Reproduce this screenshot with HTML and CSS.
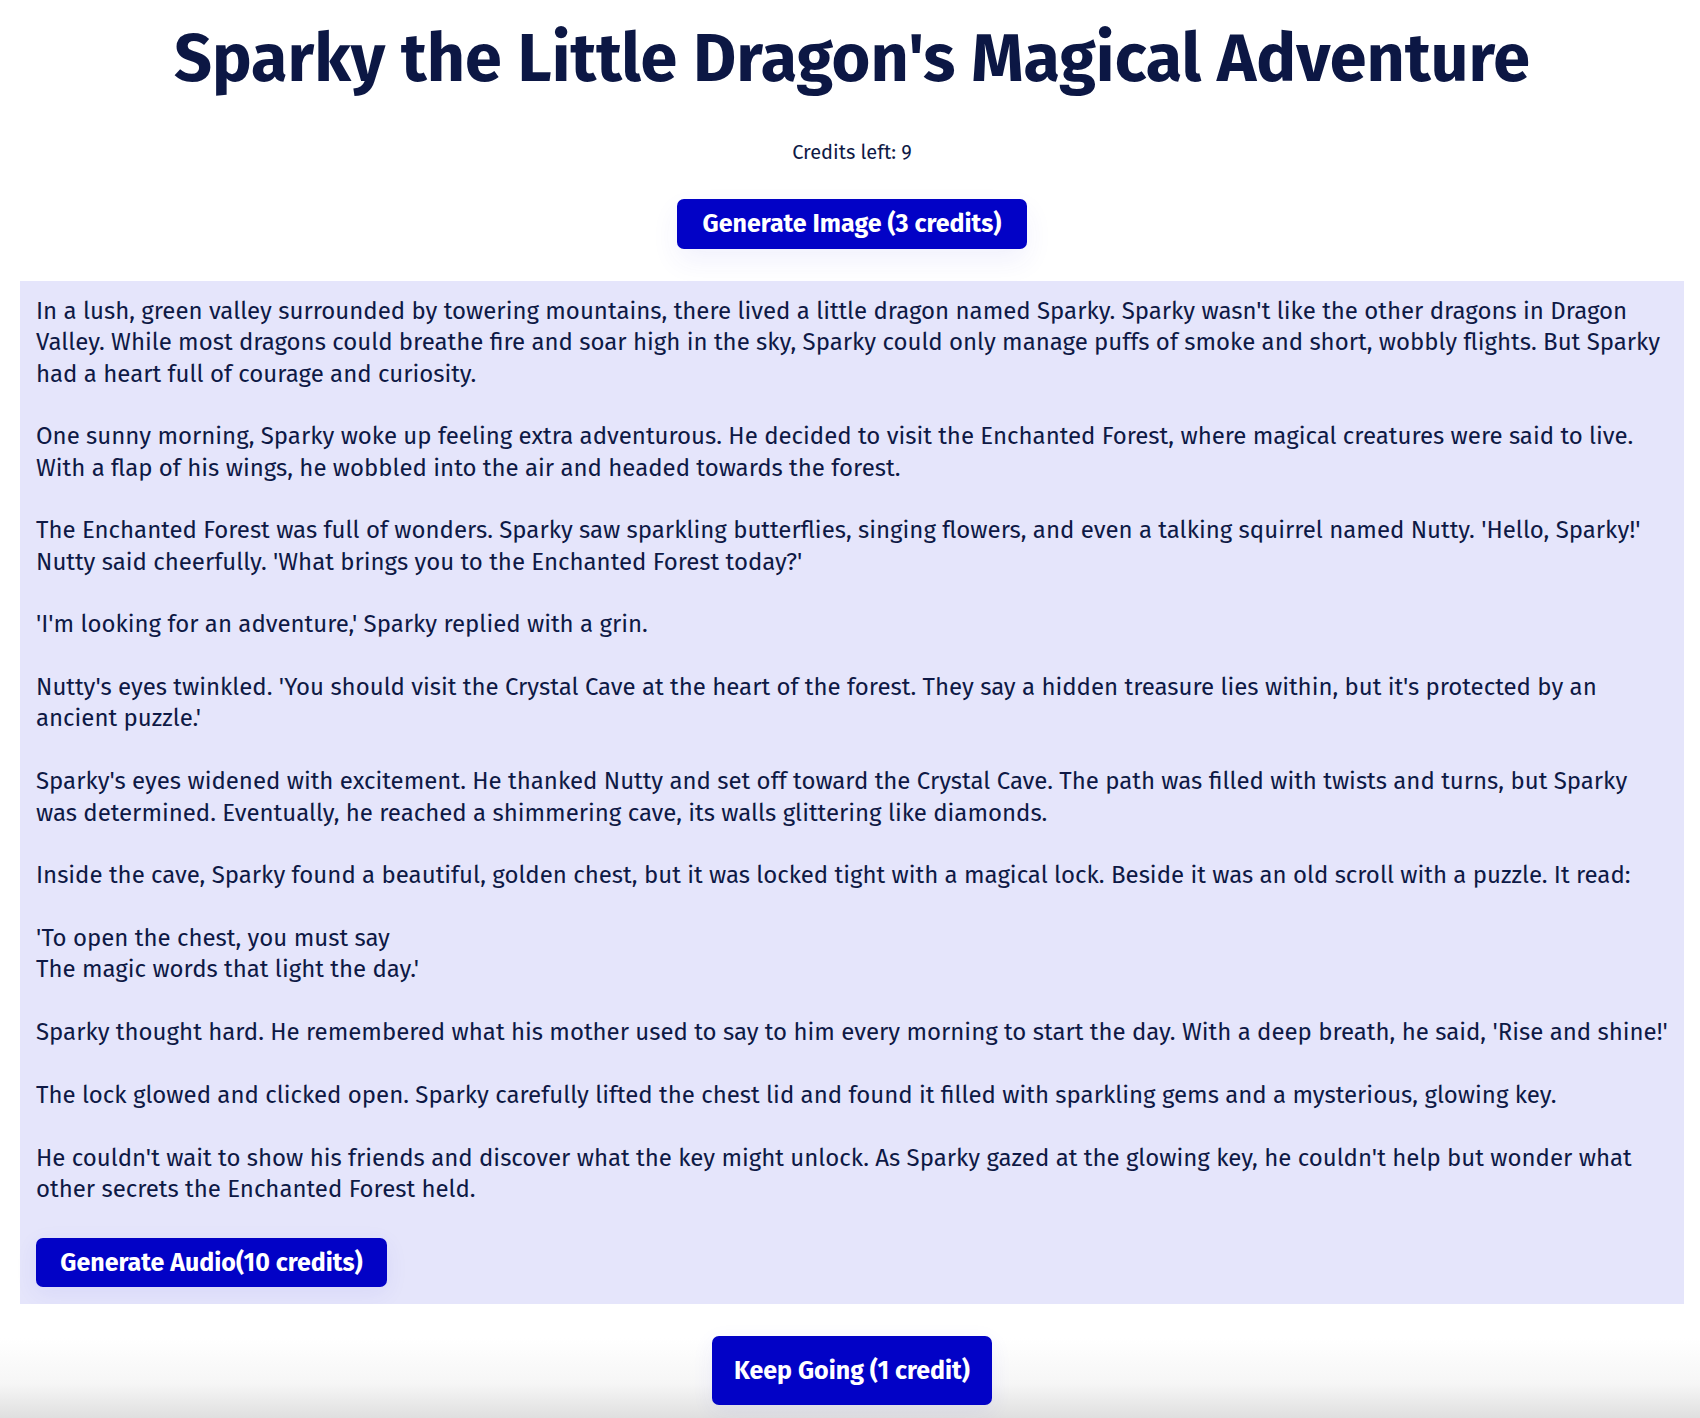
FILE: index.html
```html
<!DOCTYPE html>
<html lang="en">
<head>
<meta charset="utf-8">
<title>Sparky the Little Dragon's Magical Adventure</title>
<link rel="stylesheet" href="styles.css">
</head>
<body>
<main class="page">
  <h1 class="title">Sparky the Little Dragon's Magical Adventure</h1>
  <p class="credits">Credits left: 9</p>
  <div class="actions">
    <button class="btn btn-image">Generate Image (3 credits)</button>
  </div>
  <section class="story">
    <p>In a lush, green valley surrounded by towering mountains, there lived a little dragon named Sparky. Sparky wasn't like the other dragons in Dragon Valley. While most dragons could breathe fire and soar high in the sky, Sparky could only manage puffs of smoke and short, wobbly flights. But Sparky had a heart full of courage and curiosity.</p>
    <p>One sunny morning, Sparky woke up feeling extra adventurous. He decided to visit the Enchanted Forest, where magical creatures were said to live. With a flap of his wings, he wobbled into the air and headed towards the forest.</p>
    <p>The Enchanted Forest was full of wonders. Sparky saw sparkling butterflies, singing flowers, and even a talking squirrel named Nutty. 'Hello, Sparky!' Nutty said cheerfully. 'What brings you to the Enchanted Forest today?'</p>
    <p>'I'm looking for an adventure,' Sparky replied with a grin.</p>
    <p>Nutty's eyes twinkled. 'You should visit the Crystal Cave at the heart of the forest. They say a hidden treasure lies within, but it's protected by an ancient puzzle.'</p>
    <p>Sparky's eyes widened with excitement. He thanked Nutty and set off toward the Crystal Cave. The path was filled with twists and turns, but Sparky was determined. Eventually, he reached a shimmering cave, its walls glittering like diamonds.</p>
    <p>Inside the cave, Sparky found a beautiful, golden chest, but it was locked tight with a magical lock. Beside it was an old scroll with a puzzle. It read:</p>
    <p>'To open the chest, you must say<br>The magic words that light the day.'</p>
    <p>Sparky thought hard. He remembered what his mother used to say to him every morning to start the day. With a deep breath, he said, 'Rise and shine!'</p>
    <p>The lock glowed and clicked open. Sparky carefully lifted the chest lid and found it filled with sparkling gems and a mysterious, glowing key.</p>
    <p>He couldn't wait to show his friends and discover what the key might unlock. As Sparky gazed at the glowing key, he couldn't help but wonder what other secrets the Enchanted Forest held.</p>
    <button class="btn btn-audio">Generate Audio(10 credits)</button>
  </section>
  <footer class="footer">
    <button class="btn btn-keep">Keep Going (1 credit)</button>
  </footer>
</main>
</body>
</html>
```
FILE: styles.css
```css
html, body {
  margin: 0;
  padding: 0;
  background: #ffffff;
}

body {
  font-family: "Fira Sans", "Liberation Sans", sans-serif;
  color: #0e1945;
}

.page {
  display: flex;
  flex-direction: column;
  align-items: center;
  margin: 0 16px 0 20px;
}

.title {
  margin: 20px 0 0;
  font-size: 66.5px;
  line-height: 1.2;
  font-weight: 700;
  color: #0c1744;
  text-align: center;
}

.credits {
  margin: 40.5px 0 0;
  font-size: 20px;
  line-height: 1.2;
  color: #0e1945;
}

.actions {
  margin-top: 34.5px;
  display: flex;
  justify-content: center;
}

.btn {
  font-family: "Fira Sans", "Liberation Sans", sans-serif;
  font-weight: 700;
  font-size: 25px;
  line-height: 30px;
  color: #ffffff;
  background: #0202c6;
  border: none;
  border-radius: 7px;
  cursor: pointer;
}

.btn-image {
  width: 350px;
  height: 50px;
  padding: 0;
  box-shadow: 0 12px 28px rgba(60, 60, 220, 0.07);
}

.story {
  align-self: stretch;
  margin-top: 32px;
  background: #e5e5fb;
  padding: 15px 16px 17px;
  font-size: 24px;
  line-height: 31.36px;
}

.story p {
  margin: 0 0 31.36px;
}

.story p:last-of-type {
  margin-bottom: 0;
}

.btn-audio {
  display: block;
  margin-top: 33px;
  width: 351px;
  height: 49px;
  padding: 0;
  box-shadow: 0 6px 22px rgba(60, 60, 220, 0.08);
}

.footer {
  align-self: stretch;
  margin: 0 -16px 0 -20px;
  padding: 32px 0 13px;
  display: flex;
  justify-content: center;
  background: linear-gradient(to bottom, #ffffff 0%, #ffffff 30%, #f6f6f6 70%, #dfdfdf 100%);
}

.btn-keep {
  width: 280px;
  height: 69px;
  padding: 0;
  margin-left: 4px;
  box-shadow: 0 6px 22px rgba(60, 60, 220, 0.07);
}
```
